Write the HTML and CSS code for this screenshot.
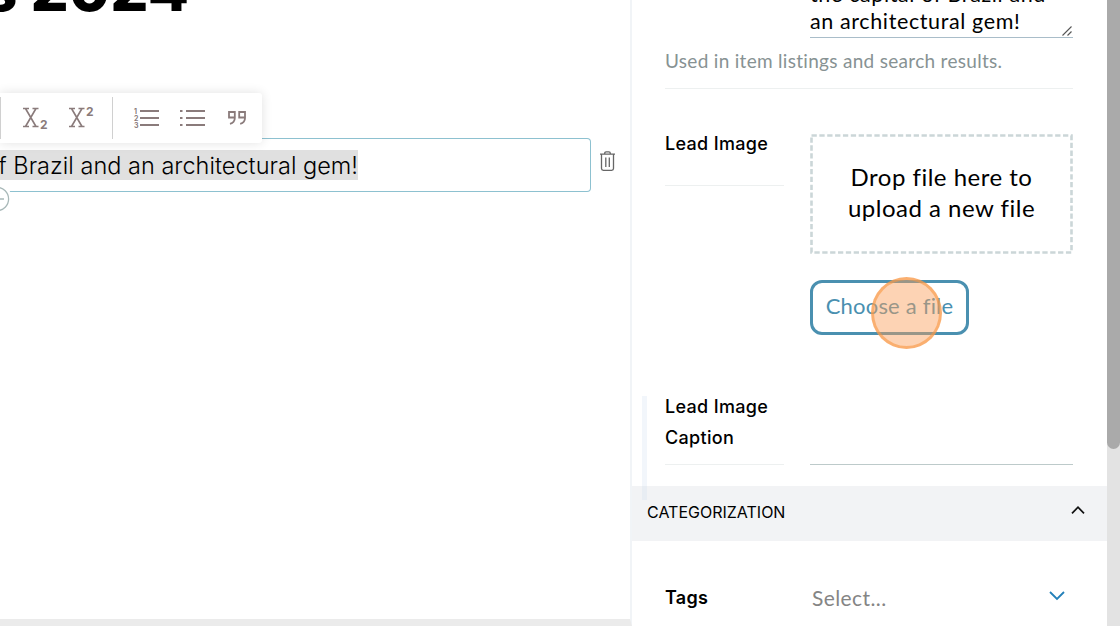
FILE: index.html
```html
<!DOCTYPE html>
<html lang="en">
<head>
<meta charset="utf-8">
<title>Item editor</title>
<link rel="stylesheet" href="styles.css">
</head>
<body>
<div class="app">
  <main class="editor">
    <h1 class="title"><span class="title-text">s 2024</span></h1>
    <div class="block">
      <div class="field"><span class="selected">of Brazil and an architectural gem!</span></div>
      <svg class="trash" viewBox="0 0 18 22" width="18" height="22"><path d="M1 4.200H16M2.500 4.200V18.500Q2.500 20.300 4.300 20.300H12.700Q14.500 20.300 14.500 18.500V4.200M5.700 4V3.200Q5.700 1.800 7.100 1.800H9.900Q11.300 1.800 11.300 3.200V4M6.800 7.500V17M10.300 7.500V17"/></svg>
    </div>
    <div class="add"><svg viewBox="0 0 26 26" width="26" height="26"><circle cx="13" cy="13" r="11.6"/><path d="M7 13H20M13 7V19"/></svg></div>
    <div class="toolbar">
      <span class="divider first"></span>
      <svg class="script" viewBox="0 0 28 26" width="28" height="26"><path d="M1 3.500H7M10.500 3.500H16.500M1 21.500H7M10.500 21.500H16.500M3.500 3.500L14 21.500M14 3.500L3.500 21.500"/><text x="18" y="23.500">2</text></svg>
      <svg class="script" viewBox="0 0 28 26" width="28" height="26"><path d="M1 3.500H7M10.500 3.500H16.500M1 21.500H7M10.500 21.500H16.500M3.500 3.500L14 21.500M14 3.500L3.500 21.500"/><text x="18" y="10.500">2</text></svg>
      <span class="divider second"></span>
      <svg class="ol" viewBox="0 0 28 22" width="28" height="22"><path d="M7 4H26M7 11H26M7 18H26"/><text x="1" y="6.500">1</text><text x="1" y="13.700">2</text><text x="1" y="20.800">3</text></svg>
      <svg class="ul" viewBox="0 0 28 22" width="28" height="22"><path d="M7 4H26M7 11H26M7 18H26M1 4H3.500M1 11H3.500M1 18H3.500"/></svg>
      <svg class="quote" viewBox="0 0 20 16" width="20" height="16"><path d="M7.800 7.500H2V2H7.800V8Q7.800 12.500 3 13.800M18 7.500H12.200V2H18V8Q18 12.500 13.200 13.800"/></svg>
    </div>
  </main>
  <aside class="sidebar">
    <section class="summary">
      <div class="textarea"><div class="textarea-text">the capital of Brazil and<br>an architectural gem!</div>
        <svg class="grip" viewBox="0 0 12 12" width="12" height="12"><path d="M1.500 10.500L10.500 1.500M6.500 10.500L10.500 6.500"/></svg>
      </div>
      <p class="help">Used in item listings and search results.</p>
    </section>
    <section class="row image-row">
      <div class="label lead">Lead Image</div>
      <div class="upload">
        <div class="drop">
          <svg class="dash" width="263" height="120" viewBox="0 0 263 120"><rect x="1.500" y="1.500" width="260" height="117"/></svg>
          <span>Drop file here to</span><span>upload a new file</span>
        </div>
        <button class="choose">Choose a file<span class="click"></span></button>
      </div>
    </section>
    <section class="row caption-row">
      <div class="label">Lead Image<br>Caption</div>
      <div class="input"></div>
      <span class="marker"></span>
    </section>
    <header class="category"><span>CATEGORIZATION</span>
      <svg width="16" height="12" viewBox="0 0 16 12"><path d="M2 9.300L8 3.200L14 9.300"/></svg>
    </header>
    <section class="tags">
      <div class="tag-label">Tags</div>
      <div class="select"><span>Select...</span><svg width="18" height="12" viewBox="0 0 18 12"><path d="M2 2L9 9L16 2"/></svg></div>
    </section>
  </aside>
  <div class="scrollbar"><div class="thumb"></div></div>
</div>
</body>
</html>
```
FILE: styles.css
```css
* { box-sizing: border-box; }
body { margin: 0; background: #fff; color: #000; font-family: Inter, sans-serif; overflow: hidden; font-variant-ligatures: none; }
svg { fill: none; flex: none; display: block; overflow: visible; }
.app { display: flex; width: 1120px; height: 626px; overflow: hidden; }
.editor { position: relative; width: 632px; height: 626px; border-right: 2px solid #f1f4f7; border-bottom: 7px solid #ebebeb; overflow: hidden; }
.title { margin: 0; height: 138px; width: 189px; display: flex; justify-content: flex-end; font-size: 60px; line-height: 64px; font-weight: 800; white-space: nowrap; }
.title-text { margin-top: -43px; }
.block { display: flex; }
.field { width: 591px; height: 54px; border: 1px solid #8dc1d0; border-left: 0; border-radius: 0 4px 4px 0; padding-top: 11px; }
.selected { display: flex; justify-content: flex-end; width: 358px; height: 30px; line-height: 31px; background: #e0e0e0; font-size: 23.500px; font-weight: 350; letter-spacing: .02px; white-space: nowrap; }
.trash { margin: 12px 0 0 8px; stroke: #666; stroke-width: 1.3; }
.add { position: absolute; left: -18px; top: 184px; padding: 2px; border-radius: 50%; background: #fff; }
.add svg { stroke: #a8b8b8; stroke-width: 1.3; }
.toolbar { position: absolute; left: 0; top: 93px; width: 262px; height: 50px; display: flex; background: #fff; border-radius: 0 3px 3px 0; box-shadow: 0 0 11px rgba(0,0,0,.12); }
.divider { width: 1px; height: 42px; margin-top: 4px; background: #d0d0d0; }
.script { margin: 12px 0 0 18px; stroke: #8a7b7b; stroke-width: 1.6; }
.first + .script { margin-left: 21px; }
.script text { font: 700 12px Inter, sans-serif; fill: #8a7b7b; stroke: none; }
.second { margin-left: 16px; }
.ol { margin: 14px 0 0 20px; }
.ul { margin: 14px 0 0 18px; }
.ol path, .ul path { stroke: #8a7b7b; stroke-width: 1.8; }
.ol text { font: 700 7px Inter, sans-serif; fill: #8a7b7b; }
.quote { margin: 17px 0 0 20px; stroke: #8a7b7b; stroke-width: 1.8; }
.sidebar { width: 475px; height: 626px; }
.summary { display: flow-root; height: 89px; margin: 0 34px 0 33px; border-bottom: 1px solid #edf0f0; }
.textarea { display: flow-root; position: relative; height: 38px; margin-left: 145px; border-bottom: 1px solid #a9bdc9; font: 21.500px/27px Lato, sans-serif; letter-spacing: .62px; }
.textarea-text { margin-top: -19px; white-space: nowrap; }
.grip { position: absolute; right: 0; bottom: 0; stroke: #555; stroke-width: 1.1; }
.help { margin: 9px 0 0; font: 19px/27px Lato, sans-serif; letter-spacing: .3px; color: #879293; white-space: nowrap; }
.row { display: flex; margin: 0 34px 0 33px; justify-content: space-between; }
.image-row { height: 307px; padding-top: 45px; }
.label { width: 119px; height: 69px; font-weight: 500; font-size: 18px; letter-spacing: .32px; line-height: 31px; border-bottom: 1px solid #edf0f0; white-space: nowrap; }
.lead { height: 52px; line-height: 20px; }
.upload { width: 263px; }
.drop { position: relative; height: 120px; display: flex; flex-direction: column; align-items: center; padding-top: 27px; font: 24px/31px Lato, sans-serif; letter-spacing: .5px; white-space: nowrap; }
.dash { position: absolute; left: 0; top: 0; stroke: #cbd6d8; stroke-width: 2.6; stroke-dasharray: 5.300 2.560; }
.choose { position: relative; display: block; width: 159px; height: 55px; margin-top: 26px; padding: 0 0 3px; border: 3px solid #4a90b0; border-radius: 12px; background: #fff; color: #4a90b0; font: 22px/30px Lato, sans-serif; letter-spacing: .2px; white-space: nowrap; }
.click { position: absolute; left: 58px; top: -6px; width: 71px; height: 72px; border: 3px solid rgba(249,151,67,.6); border-radius: 50%; background: rgba(251,158,88,.45); }
.caption-row { position: relative; height: 90px; }
.caption-row .label { margin-top: -5px; height: 74px; }
.input { width: 263px; height: 69px; border-bottom: 1px solid #bdcaca; }
.marker { position: absolute; z-index: 1; left: -23px; top: 0; width: 5px; height: 104px; background: rgba(205,220,238,.25); }
.category { height: 55px; padding: 0 21px 3px 15px; background: #f2f3f5; display: flex; align-items: center; justify-content: space-between; font-size: 16px; }
.category svg { margin-bottom: 4px; stroke: #111; stroke-width: 1.7; }
.tags { height: 85px; margin: 0 41px 0 33px; display: flex; justify-content: space-between; align-items: flex-start; padding-top: 41px; }
.tag-label { margin-top: 2px; font-size: 18px; font-weight: 600; letter-spacing: .25px; line-height: 28px; }
.select { width: 254px; display: flex; justify-content: space-between; color: #858585; font: 21px/31px Lato, sans-serif; letter-spacing: .4px; }
.select svg { margin-top: 8px; stroke: #2380b9; stroke-width: 1.8; }
.scrollbar { width: 13px; height: 626px; background: #e3e3e3; }
.thumb { height: 449px; background: #aaa; border-radius: 0 0 7px 7px; }
```
